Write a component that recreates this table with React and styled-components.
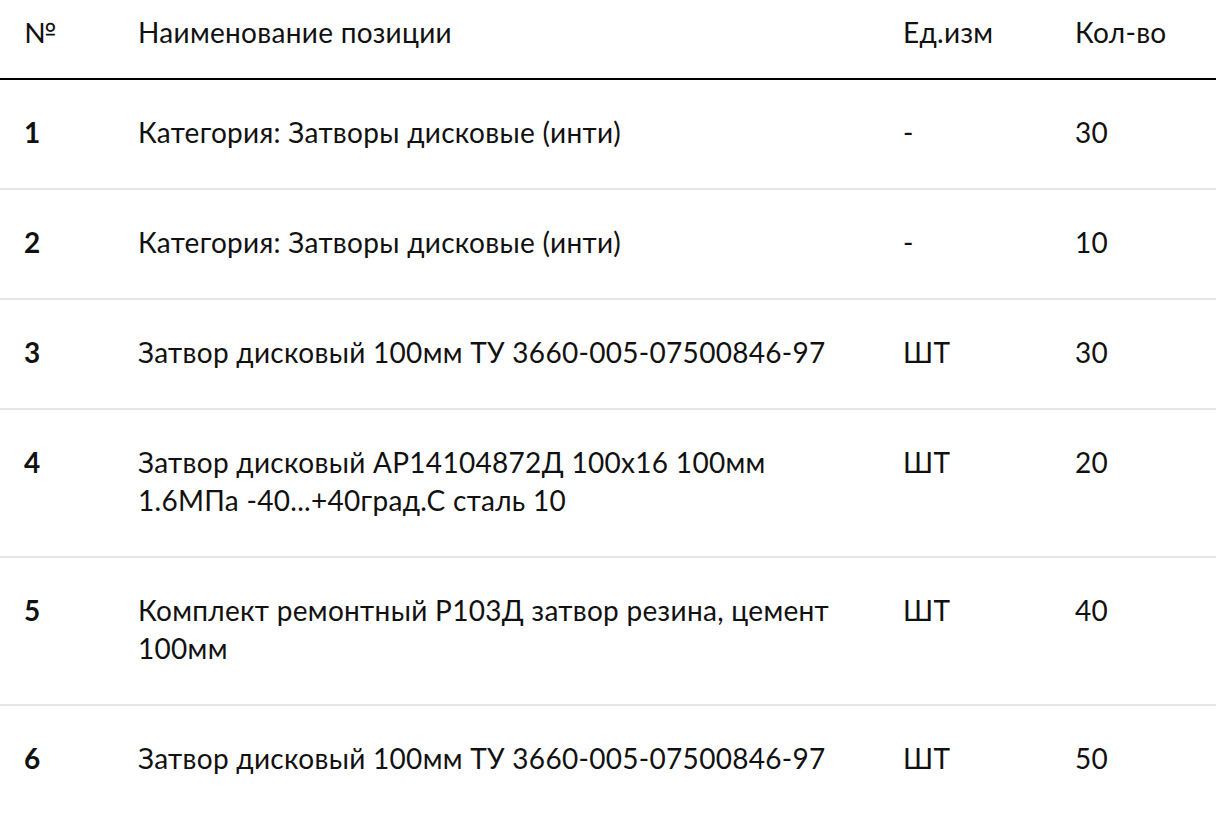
import React from "react";
import styled, { createGlobalStyle } from "styled-components";

const Global = createGlobalStyle`
  html, body { margin: 0; padding: 0; background: #fff; }
  body { font-family: "Lato", "Noto Sans", sans-serif; color: #111; }
`;

const Table = styled.div`
  width: 1216px;
  display: flex;
  flex-direction: column;
`;

const Row = styled.div`
  display: grid;
  grid-template-columns: 114px 765px 172px 1fr;
  padding-left: 24px;
  font-size: 28px;
  letter-spacing: 0.3px;
  line-height: 38px;
  border-bottom: 2px solid ${(p) => (p.$head ? "#000" : "#e6e6e6")};
  padding-top: ${(p) => (p.$head ? "13px" : "33px")};
  padding-bottom: ${(p) => (p.$head ? "27px" : "37px")};
  &:last-child { border-bottom: none; }
`;

const Cell = styled.div`
  font-weight: ${(p) => (p.$bold ? 700 : 400)};
  padding-right: ${(p) => (p.$wide ? "55px" : "0")};
`;

const rows = [
  ["1", "Категория: Затворы дисковые (инти)", "-", "30"],
  ["2", "Категория: Затворы дисковые (инти)", "-", "10"],
  ["3", "Затвор дисковый 100мм ТУ 3660-005-07500846-97", "ШТ", "30"],
  ["4", "Затвор дисковый АР14104872Д 100х16 100мм 1.6МПа -40...+40град.С сталь 10", "ШТ", "20"],
  ["5", "Комплект ремонтный Р103Д затвор резина, цемент 100мм", "ШТ", "40"],
  ["6", "Затвор дисковый 100мм ТУ 3660-005-07500846-97", "ШТ", "50"],
];

export default function App() {
  return (
    <>
      <Global />
      <Table>
        <Row $head>
          <Cell>№</Cell>
          <Cell $wide>Наименование позиции</Cell>
          <Cell>Ед.изм</Cell>
          <Cell>Кол-во</Cell>
        </Row>
        {rows.map((r) => (
          <Row key={r[0]}>
            <Cell $bold>{r[0]}</Cell>
            <Cell $wide>{r[1]}</Cell>
            <Cell>{r[2]}</Cell>
            <Cell>{r[3]}</Cell>
          </Row>
        ))}
      </Table>
    </>
  );
}
